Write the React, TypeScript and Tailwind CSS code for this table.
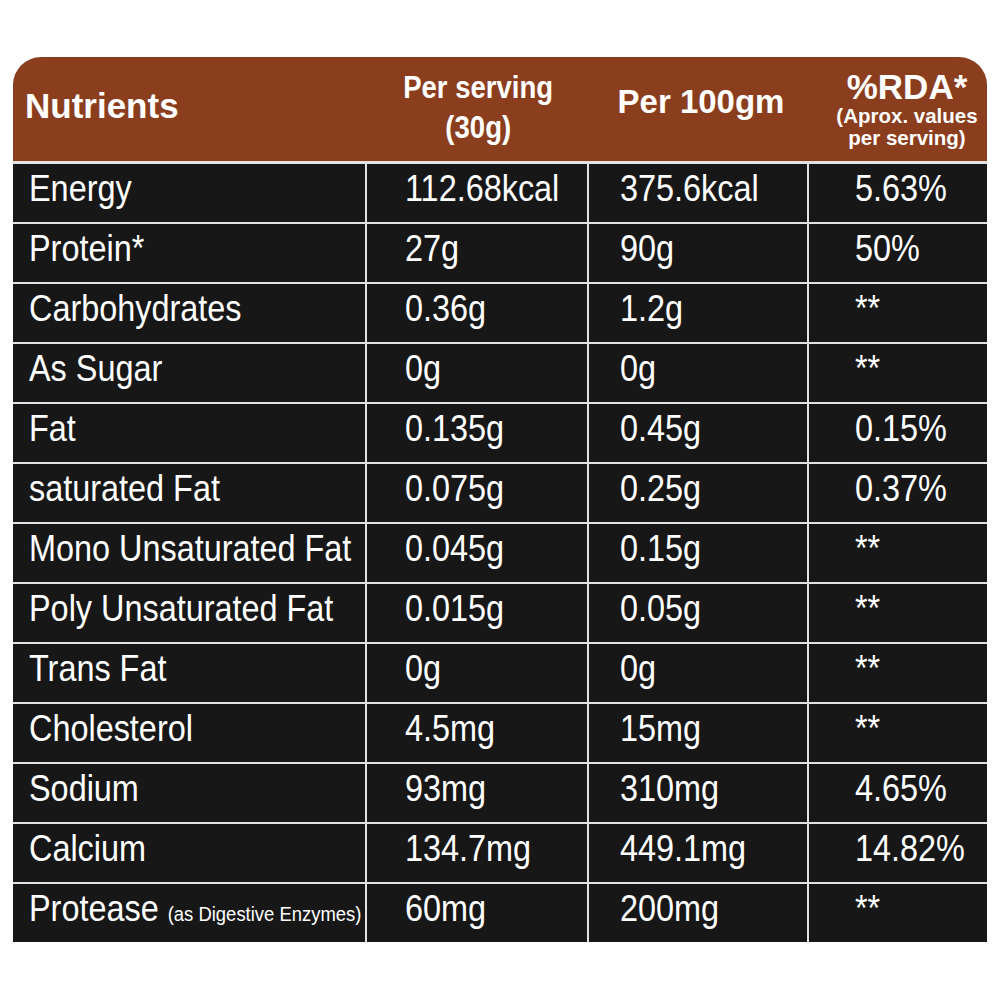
const sans = "font-['Liberation_Sans',Arial,sans-serif]"

type Row = {
  name: string
  note?: string
  serving: string
  per100: string
  rda: string
}

const rows: Row[] = [
  { name: 'Energy', serving: '112.68kcal', per100: '375.6kcal', rda: '5.63%' },
  { name: 'Protein*', serving: '27g', per100: '90g', rda: '50%' },
  { name: 'Carbohydrates', serving: '0.36g', per100: '1.2g', rda: '**' },
  { name: 'As Sugar', serving: '0g', per100: '0g', rda: '**' },
  { name: 'Fat', serving: '0.135g', per100: '0.45g', rda: '0.15%' },
  { name: 'saturated Fat', serving: '0.075g', per100: '0.25g', rda: '0.37%' },
  { name: 'Mono Unsaturated Fat', serving: '0.045g', per100: '0.15g', rda: '**' },
  { name: 'Poly Unsaturated Fat', serving: '0.015g', per100: '0.05g', rda: '**' },
  { name: 'Trans Fat', serving: '0g', per100: '0g', rda: '**' },
  { name: 'Cholesterol', serving: '4.5mg', per100: '15mg', rda: '**' },
  { name: 'Sodium', serving: '93mg', per100: '310mg', rda: '4.65%' },
  { name: 'Calcium', serving: '134.7mg', per100: '449.1mg', rda: '14.82%' },
  { name: 'Protease', note: '(as Digestive Enzymes)', serving: '60mg', per100: '200mg', rda: '**' },
]

// the label uses a condensed face; squeeze Liberation Sans to match
function Cell({ children, className = '' }: { children: React.ReactNode; className?: string }) {
  return (
    <div
      className={`flex h-[58px] items-center overflow-visible whitespace-nowrap bg-[#171717] pb-[8px] text-[36px] text-white ${sans} ${className}`}
    >
      <span className="inline-block origin-left scale-x-[0.9]">{children}</span>
    </div>
  )
}

export default function App() {
  return (
    <div className="min-h-screen bg-white pl-[13px] pt-[57px]">
      <div className="w-[974px]">
        {/* header */}
        <div className={`flex h-[104px] rounded-t-[28px] bg-[#8b3e1d] font-bold text-white ${sans}`}>
          <div className="flex w-[354px] items-center pb-[6px] pl-[12px] text-[35px]">Nutrients</div>
          <div className="flex w-[222px] flex-col items-center justify-center pb-[4px] text-[32px] leading-[40px]">
            <span className="inline-block scale-x-[0.86]">Per serving</span>
            <span className="inline-block scale-x-[0.86]">(30g)</span>
          </div>
          <div className="flex w-[220px] items-center justify-center pb-[14px] pl-[4px] text-[33px]">
            Per 100gm
          </div>
          <div className="flex w-[178px] flex-col items-center justify-center pl-[18px]">
            <span className="text-[35px] leading-[36px]">%RDA*</span>
            <span className="text-[20.5px] leading-[22px]">(Aprox. values</span>
            <span className="text-[20.5px] leading-[22px]">per serving)</span>
          </div>
        </div>

        {/* body */}
        <div className="grid grid-cols-[352px_220px_218px_178px] gap-[2px] bg-[#e2e2e2] pt-[3px]">
          {rows.map((r) => (
            <div key={r.name} className="contents">
              <Cell className="pl-[16px]">
                {r.name}
                {r.note && <span className="ml-[10px] text-[20.5px]">{r.note}</span>}
              </Cell>
              <Cell className="pl-[38px]">{r.serving}</Cell>
              <Cell className="pl-[31px]">{r.per100}</Cell>
              <Cell className="pl-[46px]">{r.rda}</Cell>
            </div>
          ))}
        </div>
      </div>
    </div>
  )
}
